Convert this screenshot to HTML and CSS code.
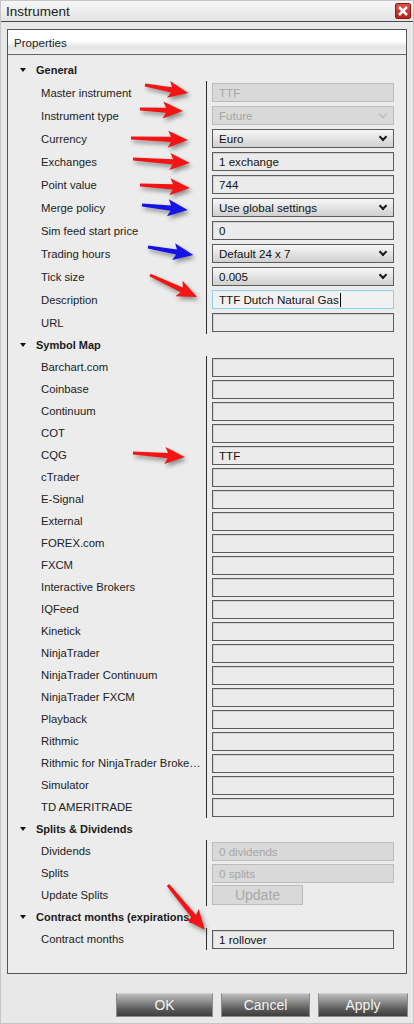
FILE: index.html
```html
<!DOCTYPE html>
<html>
<head>
<meta charset="UTF-8">
<meta name="viewport" content="width=device-width">
<title>Instrument</title>
<link rel="stylesheet" href="styles.css">
</head>
<body>
<div class="window">
  <div class="titlebar">
    <span class="title">Instrument</span>
    <span class="close"><svg width="16" height="16" viewBox="0 0 16 16"><path d="M4.5 4.5 L11.5 11.5 M11.5 4.5 L4.5 11.5" stroke="#fff" stroke-width="3" stroke-linecap="square"/></svg></span>
  </div>

  <div class="panel">
    <div class="panel-head">Properties</div>
    <div class="grid">

      <div class="group-head"><span class="tri"></span>General</div>
      <div class="rows tall">
        <div class="row"><span class="lbl">Master instrument</span><span class="val"><span class="box off">TTF</span></span></div>
        <div class="row"><span class="lbl">Instrument type</span><span class="val"><span class="box combo off">Future<i class="chev"></i></span></span></div>
        <div class="row"><span class="lbl">Currency</span><span class="val"><span class="box combo">Euro<i class="chev"></i></span></span></div>
        <div class="row"><span class="lbl">Exchanges</span><span class="val"><span class="box">1 exchange</span></span></div>
        <div class="row"><span class="lbl">Point value</span><span class="val"><span class="box">744</span></span></div>
        <div class="row"><span class="lbl">Merge policy</span><span class="val"><span class="box combo">Use global settings<i class="chev"></i></span></span></div>
        <div class="row"><span class="lbl">Sim feed start price</span><span class="val"><span class="box">0</span></span></div>
        <div class="row"><span class="lbl">Trading hours</span><span class="val"><span class="box combo">Default 24 x 7<i class="chev"></i></span></span></div>
        <div class="row"><span class="lbl">Tick size</span><span class="val"><span class="box combo">0.005<i class="chev"></i></span></span></div>
        <div class="row"><span class="lbl">Description</span><span class="val"><span class="box focus">TTF Dutch Natural Gas<i class="caret"></i></span></span></div>
        <div class="row"><span class="lbl">URL</span><span class="val"><span class="box"></span></span></div>
      </div>

      <div class="group-head"><span class="tri"></span>Symbol Map</div>
      <div class="rows">
        <div class="row"><span class="lbl">Barchart.com</span><span class="val"><span class="box"></span></span></div>
        <div class="row"><span class="lbl">Coinbase</span><span class="val"><span class="box"></span></span></div>
        <div class="row"><span class="lbl">Continuum</span><span class="val"><span class="box"></span></span></div>
        <div class="row"><span class="lbl">COT</span><span class="val"><span class="box"></span></span></div>
        <div class="row"><span class="lbl">CQG</span><span class="val"><span class="box">TTF</span></span></div>
        <div class="row"><span class="lbl">cTrader</span><span class="val"><span class="box"></span></span></div>
        <div class="row"><span class="lbl">E-Signal</span><span class="val"><span class="box"></span></span></div>
        <div class="row"><span class="lbl">External</span><span class="val"><span class="box"></span></span></div>
        <div class="row"><span class="lbl">FOREX.com</span><span class="val"><span class="box"></span></span></div>
        <div class="row"><span class="lbl">FXCM</span><span class="val"><span class="box"></span></span></div>
        <div class="row"><span class="lbl">Interactive Brokers</span><span class="val"><span class="box"></span></span></div>
        <div class="row"><span class="lbl">IQFeed</span><span class="val"><span class="box"></span></span></div>
        <div class="row"><span class="lbl">Kinetick</span><span class="val"><span class="box"></span></span></div>
        <div class="row"><span class="lbl">NinjaTrader</span><span class="val"><span class="box"></span></span></div>
        <div class="row"><span class="lbl">NinjaTrader Continuum</span><span class="val"><span class="box"></span></span></div>
        <div class="row"><span class="lbl">NinjaTrader FXCM</span><span class="val"><span class="box"></span></span></div>
        <div class="row"><span class="lbl">Playback</span><span class="val"><span class="box"></span></span></div>
        <div class="row"><span class="lbl">Rithmic</span><span class="val"><span class="box"></span></span></div>
        <div class="row"><span class="lbl">Rithmic for NinjaTrader Broke…</span><span class="val"><span class="box"></span></span></div>
        <div class="row"><span class="lbl">Simulator</span><span class="val"><span class="box"></span></span></div>
        <div class="row"><span class="lbl">TD AMERITRADE</span><span class="val"><span class="box"></span></span></div>
      </div>

      <div class="group-head"><span class="tri"></span>Splits &amp; Dividends</div>
      <div class="rows">
        <div class="row"><span class="lbl">Dividends</span><span class="val"><span class="box off">0 dividends</span></span></div>
        <div class="row"><span class="lbl">Splits</span><span class="val"><span class="box off">0 splits</span></span></div>
        <div class="row"><span class="lbl">Update Splits</span><span class="val"><span class="update">Update</span></span></div>
      </div>

      <div class="group-head"><span class="tri"></span>Contract months (expirations)</div>
      <div class="rows">
        <div class="row"><span class="lbl">Contract months</span><span class="val"><span class="box">1 rollover</span></span></div>
      </div>

    </div>
  </div>

  <div class="actions">
    <span class="btn ok">OK</span>
    <span class="btn cancel">Cancel</span>
    <span class="btn apply">Apply</span>
  </div>

  <!-- annotation arrows drawn over the dialog -->
  <svg class="marks" width="414" height="1024" viewBox="0 0 414 1024">
    <polygon class="red" transform="translate(145 85) rotate(10.5)" points="0,-1.5 27,-2.6 24,-8.5 44,0 24,8.5 27,2.6 0,1.5"/>
    <polygon class="red" transform="translate(140 109) rotate(2.7)" points="0,-1.5 26,-2.6 23,-8.5 43,0 23,8.5 26,2.6 0,1.5"/>
    <polygon class="red" transform="translate(131 138) rotate(2)" points="0,-1.5 40,-2.6 37,-8.5 57,0 37,8.5 40,2.6 0,1.5"/>
    <polygon class="red" transform="translate(133 159) rotate(4)" points="0,-1.5 40,-2.6 37,-8.5 57,0 37,8.5 40,2.6 0,1.5"/>
    <polygon class="red" transform="translate(140 185) rotate(3.4)" points="0,-1.5 33,-2.6 30,-8.5 50,0 30,8.5 33,2.6 0,1.5"/>
    <polygon class="blue" transform="translate(142 205) rotate(6.2)" points="0,-1.5 29,-2.6 26,-8.5 46,0 26,8.5 29,2.6 0,1.5"/>
    <polygon class="blue" transform="translate(148 247) rotate(10)" points="0,-1.5 29,-2.6 26,-8.5 46,0 26,8.5 29,2.6 0,1.5"/>
    <polygon class="red" transform="translate(150 275) rotate(25)" points="0,-1.5 35,-2.6 32,-8.5 52,0 32,8.5 35,2.6 0,1.5"/>
    <polygon class="red" transform="translate(133 453) rotate(4.4)" points="0,-1.5 35,-2.6 32,-8.5 52,0 32,8.5 35,2.6 0,1.5"/>
    <polygon class="red" transform="translate(168 885) rotate(50.6)" points="0,-1.5 41,-2.6 38,-8.5 58,0 38,8.5 41,2.6 0,1.5"/>
  </svg>
</div>
</body>
</html>
```

FILE: styles.css
```css
* { box-sizing: border-box; }

body {
    margin: 0;
    background: #e9e9e9;
    font-family: "Liberation Sans", Arial, sans-serif;
    color: #1e1e1e;
}

.window {
    position: relative;
    width: 414px;
    height: 1024px;
    background: #e8e8e8;
    border: 1px solid #c6c6c6;
}

.titlebar {
    height: 21px;
    display: flex;
    align-items: center;
    justify-content: space-between;
    padding: 0 2px 0 5px;
    background: linear-gradient(#f7f7f7, #e4e4e4);
    border-bottom: 1px solid #4a4a4a;
}
.title { font-size: 13.5px; color: #202020; }
.close {
    width: 16px; height: 16px;
    display: flex;
    background: linear-gradient(#e0544a, #b8201a);
    border: 1px solid #8a1a14;
    border-radius: 2px;
}
.close svg { width: 14px; height: 14px; }

.panel {
    margin: 7px 0 0 6px;
    width: 400px;
    height: 945px;
    border: 1px solid #555;
    background: #ececec;
}
.panel-head {
    height: 25px;
    padding-left: 6px;
    display: flex;
    align-items: center;
    font-size: 11.6px;
    color: #222;
    background: linear-gradient(#fff 0%, #fff 45%, #e4e4e4 70%, #f0f0f0 100%);
    border-bottom: 1px solid #666;
}

.grid { padding-top: 4px; }

.group-head {
    height: 22px;
    display: flex;
    align-items: center;
    padding-left: 12px;
    font-size: 11px;
    font-weight: bold;
    color: #1a1a1a;
    white-space: nowrap;
}
.tri {
    width: 0; height: 0;
    margin-right: 10px;
    border-left: 3.5px solid transparent;
    border-right: 3.5px solid transparent;
    border-top: 4px solid #111;
}

.row {
    height: 22px;
    display: grid;
    grid-template-columns: 165px 1fr;
    align-items: center;
    padding: 0 12px 0 33px;
}
.rows.tall .row { height: 23px; }

.lbl {
    font-size: 11.3px;
    color: #222;
    white-space: nowrap;
}
.val {
    height: 100%;
    display: flex;
    align-items: center;
    padding-left: 5px;
    border-left: 1px solid #2c2c2c;
}

.box {
    width: 182px;
    height: 19px;
    display: flex;
    align-items: center;
    padding: 0 6px;
    font-size: 11.6px;
    color: #111;
    background: #ebebeb;
    border: 1px solid #5c5c5c;
    box-shadow: inset 1px 1px 0 #d2d2d2;
}
.box.off {
    background: #d9d9d9;
    border-color: #bcbcbc;
    color: #a6a6a6;
    box-shadow: none;
}
.box.combo {
    justify-content: space-between;
    background: linear-gradient(#f7f7f7, #d0d0d0);
    box-shadow: none;
}
.box.combo.off { background: #d9d9d9; }
.box.focus {
    border-color: #8fd2ee;
    background: #f1f1f1;
    box-shadow: none;
}
.chev {
    width: 6px; height: 6px;
    margin: -4px 1px 0 0;
    border-right: 2px solid #1a1a1a;
    border-bottom: 2px solid #1a1a1a;
    transform: rotate(45deg);
}
.off .chev { border-color: #b4b4b4; border-width: 1px; }
.caret {
    width: 1px; height: 14px;
    margin-left: 1px;
    background: #000;
}

.update {
    width: 91px;
    height: 20px;
    display: flex;
    align-items: center;
    justify-content: center;
    font-size: 14px;
    color: #a8a8a8;
    background: #d9d9d9;
    border: 1px solid #bcbcbc;
}

.actions {
    display: flex;
    justify-content: flex-end;
    gap: 8px;
    margin-top: 19px;
    padding-right: 5px;
}
.btn {
    height: 24px;
    display: flex;
    align-items: center;
    justify-content: center;
    font-size: 14px;
    color: #f2f2f2;
    background: linear-gradient(#bdbdbd 0%, #8c8c8c 35%, #5a5a5a 70%, #3e3e3e 100%);
    border: 1px solid #8a8a8a;
    border-top-color: #d0d0d0;
}
.btn.ok { width: 97px; }
.btn.cancel { width: 89px; }
.btn.apply { width: 90px; }

.marks {
    position: absolute;
    top: -1px;
    left: -1px;
    pointer-events: none;
    filter: drop-shadow(2px 3px 2px rgba(0, 0, 0, 0.4));
}
.marks .red { fill: #f41414; }
.marks .blue { fill: #1414e8; }
```
